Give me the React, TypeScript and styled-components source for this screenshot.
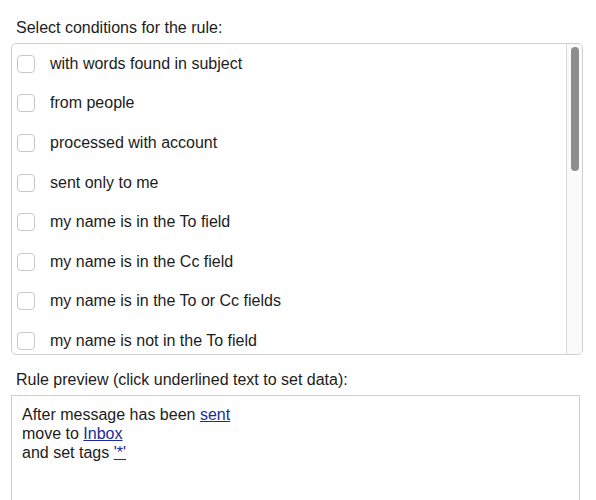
import { createGlobalStyle, styled } from "styled-components";

const GlobalStyle = createGlobalStyle`
  html, body {
    margin: 0;
    padding: 0;
    background: #ffffff;
  }
  body {
    font-family: "Liberation Sans", Arial, sans-serif;
    font-size: 16px;
    color: #1c1c1c;
  }
`;

const Page = styled.div`
  display: flex;
  flex-direction: column;
  box-sizing: border-box;
  height: 500px;
  overflow: hidden;
  padding: 18px 13px 0 11px;
  width: 596px;
`;

const Caption = styled.div<{ $top?: number }>`
  margin: ${(p) => p.$top ?? 0}px 0 6px 5px;
  line-height: 19px;
`;

const ListBox = styled.div`
  display: flex;
  height: 310px;
  border: 1px solid #cfcfcf;
  border-radius: 5px;
  overflow: hidden;
  background: #fff;
  flex: none;
`;

const Items = styled.div`
  flex: 1;
  overflow: hidden;
`;

const Track = styled.div`
  width: 16px;
  flex: none;
  background: #fafafa;
  border-left: 1px solid #dcdcdc;
  padding: 3px 3px 0 4px;
  box-sizing: border-box;
`;

const Thumb = styled.div`
  height: 124px;
  border-radius: 5px;
  background: #8e8e8e;
`;

const Row = styled.label`
  display: flex;
  align-items: center;
  gap: 15px;
  height: 39.6px;
  padding-left: 5px;
  cursor: default;
`;

const Box = styled.span`
  width: 16px;
  height: 16px;
  border: 1px solid #c8c8c8;
  border-radius: 4px;
  background: #fff;
  flex: none;
`;

const Preview = styled.div`
  width: 557px;
  height: 140px;
  flex: none;
  border: 1px solid #cfcfcf;
  padding: 9px 0 0 10px;
  line-height: 19px;
`;

const Link = styled.a`
  color: #1b2a9e;
  text-decoration: underline;
`;

const conditions = [
  "with words found in subject",
  "from people",
  "processed with account",
  "sent only to me",
  "my name is in the To field",
  "my name is in the Cc field",
  "my name is in the To or Cc fields",
  "my name is not in the To field",
  "my name is not in the Cc field",
  "with words found in body",
  "with words found in header",
  "marked as junk",
  "marked as flagged",
  "marked as read",
  "with attachment",
  "with priority",
  "with size greater than",
  "with size less than",
  "tagged with",
  "older than",
];

export default function App() {
  return (
    <>
      <GlobalStyle />
      <Page>
        <Caption>Select conditions for the rule:</Caption>
        <ListBox>
          <Items>
            {conditions.map((c) => (
              <Row key={c}>
                <Box />
                {c}
              </Row>
            ))}
          </Items>
          <Track>
            <Thumb />
          </Track>
        </ListBox>
        <Caption $top={15}>Rule preview (click underlined text to set data):</Caption>
        <Preview>
          After message has been <Link>sent</Link>
          <br />
          move to <Link>Inbox</Link>
          <br />
          and set tags <Link>'*'</Link>
        </Preview>
      </Page>
    </>
  );
}
